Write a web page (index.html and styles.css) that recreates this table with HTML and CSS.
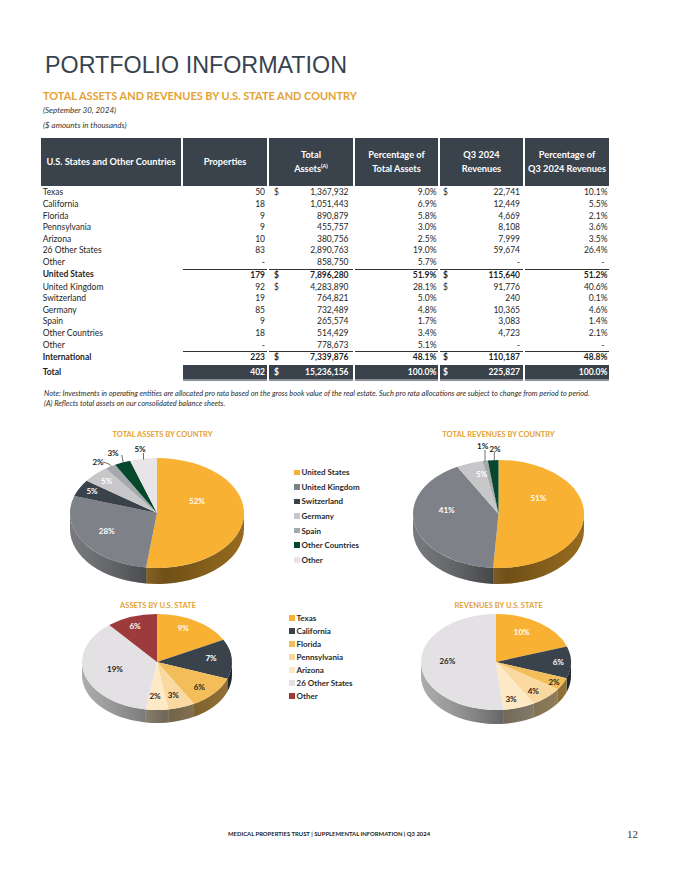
FILE: index.html
```html
<!DOCTYPE html>
<html lang="en">
<head>
<meta charset="utf-8">
<title>Portfolio Information</title>
<link rel="stylesheet" href="styles.css">
</head>
<body>
<div class="page">
  <h1 class="title">PORTFOLIO INFORMATION</h1>
  <h2 class="subtitle">TOTAL ASSETS AND REVENUES BY U.S. STATE AND COUNTRY</h2>
  <p class="meta">(September 30, 2024)</p>
  <p class="meta">($ amounts in thousands)</p>

  <table class="data">
    <colgroup>
      <col class="w1"><col class="w2"><col class="w3"><col class="w4"><col class="w5"><col class="w6">
    </colgroup>
    <thead>
      <tr>
        <th>U.S. States and Other Countries</th>
        <th>Properties</th>
        <th>Total<br>Assets<sup>(A)</sup></th>
        <th>Percentage of<br>Total Assets</th>
        <th>Q3 2024<br>Revenues</th>
        <th>Percentage of<br>Q3 2024 Revenues</th>
      </tr>
    </thead>
    <tbody>
      <tr class="first"><td>Texas</td><td>50</td><td><span class="cur">$</span>1,367,932</td><td>9.0%</td><td><span class="cur">$</span>22,741</td><td>10.1%</td></tr>
      <tr><td>California</td><td>18</td><td>1,051,443</td><td>6.9%</td><td>12,449</td><td>5.5%</td></tr>
      <tr><td>Florida</td><td>9</td><td>890,879</td><td>5.8%</td><td>4,669</td><td>2.1%</td></tr>
      <tr><td>Pennsylvania</td><td>9</td><td>455,757</td><td>3.0%</td><td>8,108</td><td>3.6%</td></tr>
      <tr><td>Arizona</td><td>10</td><td>380,756</td><td>2.5%</td><td>7,999</td><td>3.5%</td></tr>
      <tr><td>26 Other States</td><td>83</td><td>2,890,763</td><td>19.0%</td><td>59,674</td><td>26.4%</td></tr>
      <tr><td>Other</td><td><span class="dash">-</span></td><td>858,750</td><td>5.7%</td><td><span class="dash">-</span></td><td><span class="dash">-</span></td></tr>
      <tr class="sub"><td>United States</td><td>179</td><td><span class="cur">$</span>7,896,280</td><td>51.9%</td><td><span class="cur">$</span>115,640</td><td>51.2%</td></tr>
      <tr><td>United Kingdom</td><td>92</td><td><span class="cur">$</span>4,283,890</td><td>28.1%</td><td><span class="cur">$</span>91,776</td><td>40.6%</td></tr>
      <tr><td>Switzerland</td><td>19</td><td>764,821</td><td>5.0%</td><td>240</td><td>0.1%</td></tr>
      <tr><td>Germany</td><td>85</td><td>732,489</td><td>4.8%</td><td>10,365</td><td>4.6%</td></tr>
      <tr><td>Spain</td><td>9</td><td>265,574</td><td>1.7%</td><td>3,083</td><td>1.4%</td></tr>
      <tr><td>Other Countries</td><td>18</td><td>514,429</td><td>3.4%</td><td>4,723</td><td>2.1%</td></tr>
      <tr><td>Other</td><td><span class="dash">-</span></td><td>778,673</td><td>5.1%</td><td><span class="dash">-</span></td><td><span class="dash">-</span></td></tr>
      <tr class="sub"><td>International</td><td>223</td><td><span class="cur">$</span>7,339,876</td><td>48.1%</td><td><span class="cur">$</span>110,187</td><td>48.8%</td></tr>
      <tr class="total"><td>Total</td><td>402</td><td><span class="cur">$</span>15,236,156</td><td>100.0%</td><td><span class="cur">$</span>225,827</td><td>100.0%</td></tr>
    </tbody>
  </table>

  <div class="notes">
    <p>Note: Investments in operating entities are allocated pro rata based on the gross book value of the real estate. Such pro rata allocations are subject to change from period to period.</p>
    <p>(A) Reflects total assets on our consolidated balance sheets.</p>
  </div>

  <section class="charts">
    <div class="chart c1">
      <div class="ctitle">TOTAL ASSETS BY COUNTRY</div>
      <svg id="pie1" class="pie-lg" viewBox="0 0 196 161"></svg>
    </div>
    <ul class="legend l1">
      <li><i class="sw k-us"></i>United States</li>
      <li><i class="sw k-uk"></i>United Kingdom</li>
      <li><i class="sw k-ch"></i>Switzerland</li>
      <li><i class="sw k-de"></i>Germany</li>
      <li><i class="sw k-es"></i>Spain</li>
      <li><i class="sw k-oc"></i>Other Countries</li>
      <li><i class="sw k-ot"></i>Other</li>
    </ul>
    <div class="chart c2">
      <div class="ctitle">TOTAL REVENUES BY COUNTRY</div>
      <svg id="pie2" class="pie-lg" viewBox="0 0 196 161"></svg>
    </div>

    <div class="chart c3">
      <div class="ctitle">ASSETS BY U.S. STATE</div>
      <svg id="pie3" class="pie-sm" viewBox="0 0 196 130"></svg>
    </div>
    <ul class="legend l2">
      <li><i class="sw k-tx"></i>Texas</li>
      <li><i class="sw k-ca"></i>California</li>
      <li><i class="sw k-fl"></i>Florida</li>
      <li><i class="sw k-pa"></i>Pennsylvania</li>
      <li><i class="sw k-az"></i>Arizona</li>
      <li><i class="sw k-os"></i>26 Other States</li>
      <li><i class="sw k-or"></i>Other</li>
    </ul>
    <div class="chart c4">
      <div class="ctitle">REVENUES BY U.S. STATE</div>
      <svg id="pie4" class="pie-sm" viewBox="0 0 196 130"></svg>
    </div>
  </section>

  <footer class="foot">
    <span class="foot-text">MEDICAL PROPERTIES TRUST | SUPPLEMENTAL INFORMATION | Q3 2024</span>
    <span class="pageno">12</span>
  </footer>
</div>
<script src="script.js"></script>
</body>
</html>
```

FILE: styles.css
```css
* { box-sizing: border-box; }
html, body { margin: 0; padding: 0; background: #fff; }
body { font-family: Lato, "Noto Sans", sans-serif; color: #2b2b2b; }

.page { width: 680px; height: 880px; padding-top: 51px; overflow: hidden; }

.title {
  margin: 0 0 0 45px;
  font: 400 23.3px/28px "Liberation Sans", Arial, sans-serif;
  color: #38434e;
}
.subtitle {
  margin: 10px 0 0 43px;
  font: 700 10.95px/14px Lato, sans-serif;
  color: #e3a233;
}
.meta {
  margin: 0 0 0 43px;
  font: italic 400 8px/14.7px Lato, sans-serif;
  color: #333;
}

.data {
  margin: 5.6px 0 0 39px;
  border-collapse: separate;
  border-spacing: 2px 0;
  table-layout: fixed;
  width: 572px;
  font-size: 8.5px;
  color: #262626;
}
.w1 { width: 140px; } .w2 { width: 84px; } .w3 { width: 84px; }
.w4 { width: 83px; } .w5 { width: 83px; } .w6 { width: 84px; }

.data th {
  height: 48px;
  padding: 0;
  background: #3a434c;
  color: #fff;
  font: 700 9.2px/13.6px Lato, sans-serif;
  text-align: center;
  vertical-align: middle;
}
.data sup { font-size: 5.5px; line-height: 0; vertical-align: 4px; }

.data td {
  height: 11.6px;
  padding: 0;
  line-height: 11.6px;
  text-align: right;
  white-space: nowrap;
}
.data td:nth-child(1) { text-align: left; padding-left: 1.7px; }
.data td:nth-child(2) { padding-right: 2px; }
.data td:nth-child(3) { padding-right: 4.5px; padding-left: 5px; }
.data td:nth-child(4) { padding-right: 1.5px; }
.data td:nth-child(5) { padding-right: 3px; padding-left: 3px; }
.data td:nth-child(6) { padding-right: 1.5px; }
.data td:nth-child(6) .dash { padding-right: 3px; }
.data .first td { border-top: 1.5px solid transparent; height: 13.1px; }
.cur { float: left; }
.dash { display: inline-block; }

.sub td { font-weight: 700; color: #1f1f1f; }
.sub td + td { border-top: 1.3px solid #333; height: 12.9px; }

.total td {
  font-weight: 700;
  height: 17.2px;
  border-top: 1.2px solid #fff;
  border-bottom: 2px solid #fff;
  line-height: 14px;
}
.total td + td {
  background: #3a434c;
  background-clip: padding-box;
  color: #fff;
  border-bottom-color: #8b9096;
}

.notes { margin: 7.4px 0 0 44px; }
.notes p {
  margin: 0;
  font: italic 400 7.4px/10px Lato, sans-serif;
  color: #2b2b2b;
}

.charts {
  margin: 21px 0 0 60px;
  display: grid;
  grid-template-columns: 196px 144px 197px;
  grid-template-rows: 171px 140px;
}
.chart { display: flex; flex-direction: column; }
.ctitle {
  height: 10px;
  font: 700 7.5px/10px Lato, sans-serif;
  color: #e3a233;
  text-align: center;
}
.c1 .ctitle { padding-left: 9px; }
.pie-lg { width: 196px; height: 161px; display: block; }
.pie-sm { width: 196px; height: 130px; display: block; }

.legend { list-style: none; margin: 0; }
.legend li {
  display: flex;
  align-items: center;
  font: 700 8px/1 Lato, sans-serif;
  color: #2a2a2a;
  white-space: nowrap;
}
.l1 { padding: 35.4px 0 0 38px; }
.l1 li { height: 14.6px; }
.l2 { padding: 10.8px 0 0 33px; }
.l2 li { height: 13px; }
.sw { display: inline-block; width: 5.5px; height: 5.5px; margin-right: 2px; flex: none; }

.k-us, .k-tx { background: #f8b133; }
.k-uk { background: #7e8187; }
.k-ch, .k-ca { background: #3a434c; }
.k-de { background: #c7c7c9; }
.k-es { background: #a5a8ac; }
.k-oc { background: #07482d; }
.k-ot { background: #e7e5e7; }
.k-fl { background: #f3bd5a; }
.k-pa { background: #fad9a0; }
.k-az { background: #fde9c6; }
.k-os { background: #e4e1e4; }
.k-or { background: #9d3b3c; }

.pw, .pk {
  font: 700 8px Lato, sans-serif;
  text-anchor: middle;
  dominant-baseline: central;
}
.pw { fill: #fff; }
.pk { fill: #1e1e1e; }
.lead { fill: none; stroke: #4a4a4a; stroke-width: 0.8; }

.foot {
  margin-top: 87px;
  display: flex;
  align-items: center;
  height: 12px;
}
.foot-text {
  margin-left: 228px;
  font: 700 5.9px/12px Lato, sans-serif;
  color: #222;
}
.pageno {
  margin-left: auto;
  margin-right: 42px;
  font: 400 11px/12px "Liberation Serif", serif;
  color: #333;
}
```

FILE: script.js
```js
(function () {
  var pies = {
    pie1: {
      cx: 97, cy: 73, rx: 87, ry: 55, d: 16,
      s: [[52, '#f8b133'], [28, '#7e8187'], [5, '#3a434c'], [5, '#c7c7c9'], [2, '#a5a8ac'], [3, '#07482d'], [5, '#e7e5e7']],
      l: [['52%', 137, 60.7, 1], ['28%', 46.7, 91, 1], ['5%', 32, 50.7, 1], ['5%', 46.7, 41, 1], ['2%', 38, 22, 0], ['3%', 53, 12.7, 0], ['5%', 80, 9, 0]],
      ln: [[[83.5, 13], [83.5, 19.5]], [[61.7, 15], [63.3, 22.5]], [[43.3, 22], [49, 24], [51, 26.5]]]
    },
    pie2: {
      cx: 98.5, cy: 74, rx: 85.5, ry: 54, d: 16,
      s: [[51, '#f8b133'], [41, '#7e8187'], [0, '#3a434c'], [5, '#c7c7c9'], [1, '#a5a8ac'], [2, '#07482d'], [0, '#e7e5e7']],
      l: [['51%', 138.3, 58.3, 1], ['41%', 46.7, 70, 1], ['5%', 81.7, 34.3, 1], ['1%', 82.7, 5.7, 0], ['2%', 95, 9, 0]],
      ln: [[[85, 10], [85, 21.5]], [[94.3, 12], [94.3, 21]]]
    },
    pie3: {
      cx: 97, cy: 51, rx: 75, ry: 48, d: 13,
      s: [[9.0, '#f8b133'], [6.9, '#3a434c'], [5.8, '#f3bd5a'], [3.0, '#fad9a0'], [2.5, '#fde9c6'], [19.0, '#e4e1e4'], [5.7, '#9d3b3c']],
      l: [['9%', 123.3, 17.3, 1], ['7%', 151, 46.7, 1], ['6%', 139.3, 75.7, 0], ['3%', 113.3, 84, 0], ['2%', 95, 84.7, 0], ['19%', 55, 58, 0], ['6%', 75, 14.7, 1]],
      ln: []
    },
    pie4: {
      cx: 96, cy: 51, rx: 75, ry: 48, d: 14,
      s: [[10.1, '#f8b133'], [5.5, '#3a434c'], [2.1, '#f3bd5a'], [3.6, '#fad9a0'], [3.5, '#fde9c6'], [26.4, '#e4e1e4'], [0, '#9d3b3c']],
      l: [['10%', 121.7, 20.7, 1], ['6%', 158.3, 50.7, 1], ['2%', 154, 70.7, 0], ['4%', 133.3, 79.7, 0], ['3%', 111, 88.3, 0], ['26%', 47.3, 49.7, 0]],
      ln: []
    }
  };

  function pt(c, a) {
    var t = a * Math.PI / 180;
    return [c.cx + c.rx * Math.sin(t), c.cy - c.ry * Math.cos(t)];
  }
  function f(n) { return n.toFixed(2); }
  function dark(hex, k) {
    var n = parseInt(hex.slice(1), 16);
    var r = (n >> 16) & 255, g = (n >> 8) & 255, b = n & 255;
    return 'rgb(' + Math.round(r * k) + ',' + Math.round(g * k) + ',' + Math.round(b * k) + ')';
  }

  Object.keys(pies).forEach(function (id) {
    var c = pies[id];
    var svg = document.getElementById(id);
    var tot = c.s.reduce(function (a, x) { return a + x[0]; }, 0);
    var a = 0, segs = [];
    c.s.forEach(function (x) {
      var sp = x[0] / tot * 360;
      segs.push({ a0: a, a1: a + sp, col: x[1] });
      a += sp;
    });

    var h = '<defs><linearGradient id="' + id + 'g" x1="0" y1="0" x2="1" y2="0">' +
      '<stop offset="0" stop-color="#fff" stop-opacity="0.22"/>' +
      '<stop offset="0.55" stop-color="#000" stop-opacity="0.32"/>' +
      '<stop offset="1" stop-color="#000" stop-opacity="0.08"/>' +
      '</linearGradient></defs>';

    function side(b0, b1, fill) {
      var p0 = pt(c, b0), p1 = pt(c, b1);
      return '<path d="M' + f(p0[0]) + ' ' + f(p0[1]) +
        ' A' + c.rx + ' ' + c.ry + ' 0 0 1 ' + f(p1[0]) + ' ' + f(p1[1]) +
        ' L' + f(p1[0]) + ' ' + f(p1[1] + c.d) +
        ' A' + c.rx + ' ' + c.ry + ' 0 0 0 ' + f(p0[0]) + ' ' + f(p0[1] + c.d) +
        ' Z" fill="' + fill + '"/>';
    }

    segs.forEach(function (s) {
      var b0 = Math.max(s.a0, 90), b1 = Math.min(s.a1, 270);
      if (b1 > b0 + 0.01) h += side(b0, b1, dark(s.col, 0.66));
    });
    h += side(90, 270, 'url(#' + id + 'g)');

    segs.forEach(function (s) {
      if (s.a1 - s.a0 < 0.01) return;
      var p0 = pt(c, s.a0), p1 = pt(c, s.a1);
      h += '<path d="M' + c.cx + ' ' + c.cy + ' L' + f(p0[0]) + ' ' + f(p0[1]) +
        ' A' + c.rx + ' ' + c.ry + ' 0 ' + (s.a1 - s.a0 > 180 ? 1 : 0) + ' 1 ' + f(p1[0]) + ' ' + f(p1[1]) +
        ' Z" fill="' + s.col + '"/>';
    });

    c.ln.forEach(function (pts) {
      h += '<polyline class="lead" points="' + pts.map(function (p) { return p.join(','); }).join(' ') + '"/>';
    });
    c.l.forEach(function (L) {
      h += '<text x="' + L[1] + '" y="' + L[2] + '" class="' + (L[3] ? 'pw' : 'pk') + '">' + L[0] + '</text>';
    });
    svg.innerHTML = h;
  });
})();
```
